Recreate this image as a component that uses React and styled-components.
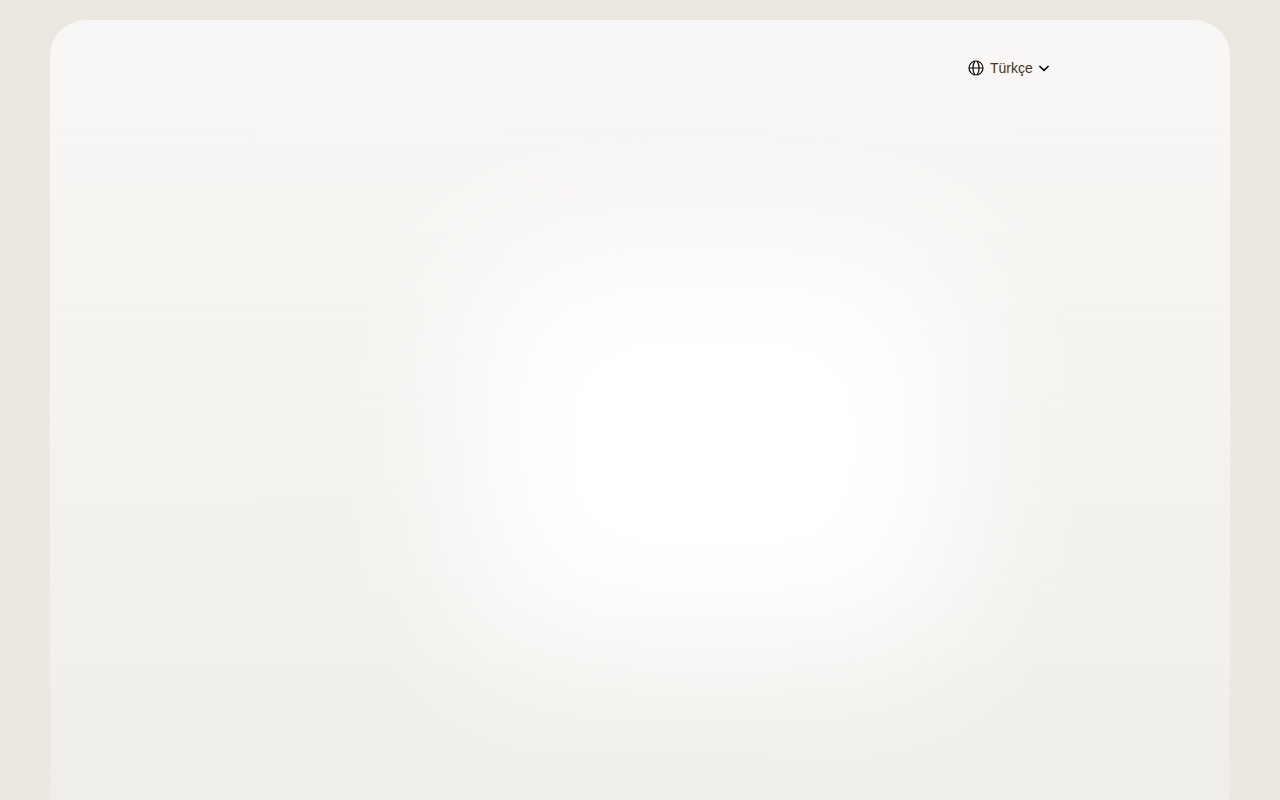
import styled, { createGlobalStyle } from 'styled-components'

export default function App() {
  return (
    <PageStyled>
      <GlobalStyle />
      <PanelStyled>
        <Glow />
        <HeaderStyled>
          <LanguagePicker />
        </HeaderStyled>
      </PanelStyled>
    </PageStyled>
  )
}

function LanguagePicker() {
  return (
    <LanguageStyled>
      <GlobeIcon />
      <LanguageSelect aria-label="Dil" defaultValue="tr">
        <option value="tr">Türkçe</option>
      </LanguageSelect>
      <ChevronIcon />
    </LanguageStyled>
  )
}

function GlobeIcon() {
  return (
    <svg width="16" height="16" viewBox="0 0 16 16" fill="none" stroke="#0a0a08" strokeWidth="1.2" aria-hidden="true">
      <circle cx="8" cy="8" r="7" />
      <path d="M7 1.1C5.5 3.1 4.9 5.5 4.9 8S5.5 12.9 7 14.9M9 1.1c1.5 2 2.1 4.4 2.1 6.9S10.5 12.9 9 14.9" />
      <path d="M1 8h14" />
    </svg>
  )
}

function ChevronIcon() {
  return (
    <svg width="12" height="12" viewBox="0 0 12 12" fill="none" stroke="#0a0a08" strokeWidth="1.7" aria-hidden="true">
      <path d="M1.4 4 6 8.4 10.6 4" />
    </svg>
  )
}

const GlobalStyle = createGlobalStyle`
  * {
    box-sizing: border-box;
  }

  body {
    margin: 0;
    background: #ebe8e1;
    font-family: "Liberation Sans", Arial, sans-serif;
  }
`

const PageStyled = styled.div`
  display: flex;
  flex-direction: column;
  min-height: 100vh;
  padding: 20px 50px 0;
`

const PanelStyled = styled.main`
  position: relative;
  flex: 1;
  border-radius: 36px 36px 0 0;
  background: linear-gradient(180deg, #f8f7f5 0%, #efeeea 100%);
  overflow: hidden;
`

const Glow = styled.div`
  position: absolute;
  top: 218px;
  left: 35%;
  width: 500px;
  height: 416px;
  border-radius: 80px;
  background: #ffffff;
  filter: blur(77px);
`

const HeaderStyled = styled.header`
  position: relative;
  display: flex;
  justify-content: flex-end;
  padding: 36px 180px 0;
`

const LanguageStyled = styled.div`
  display: flex;
  align-items: center;
  height: 24px;

  svg {
    flex: none;
  }
`

const LanguageSelect = styled.select`
  appearance: none;
  margin: 0;
  padding: 0 5px 0 6px;
  border: 0;
  background: transparent;
  color: #463418;
  font-family: inherit;
  font-size: 14px;
  line-height: 20px;
  cursor: pointer;
`
